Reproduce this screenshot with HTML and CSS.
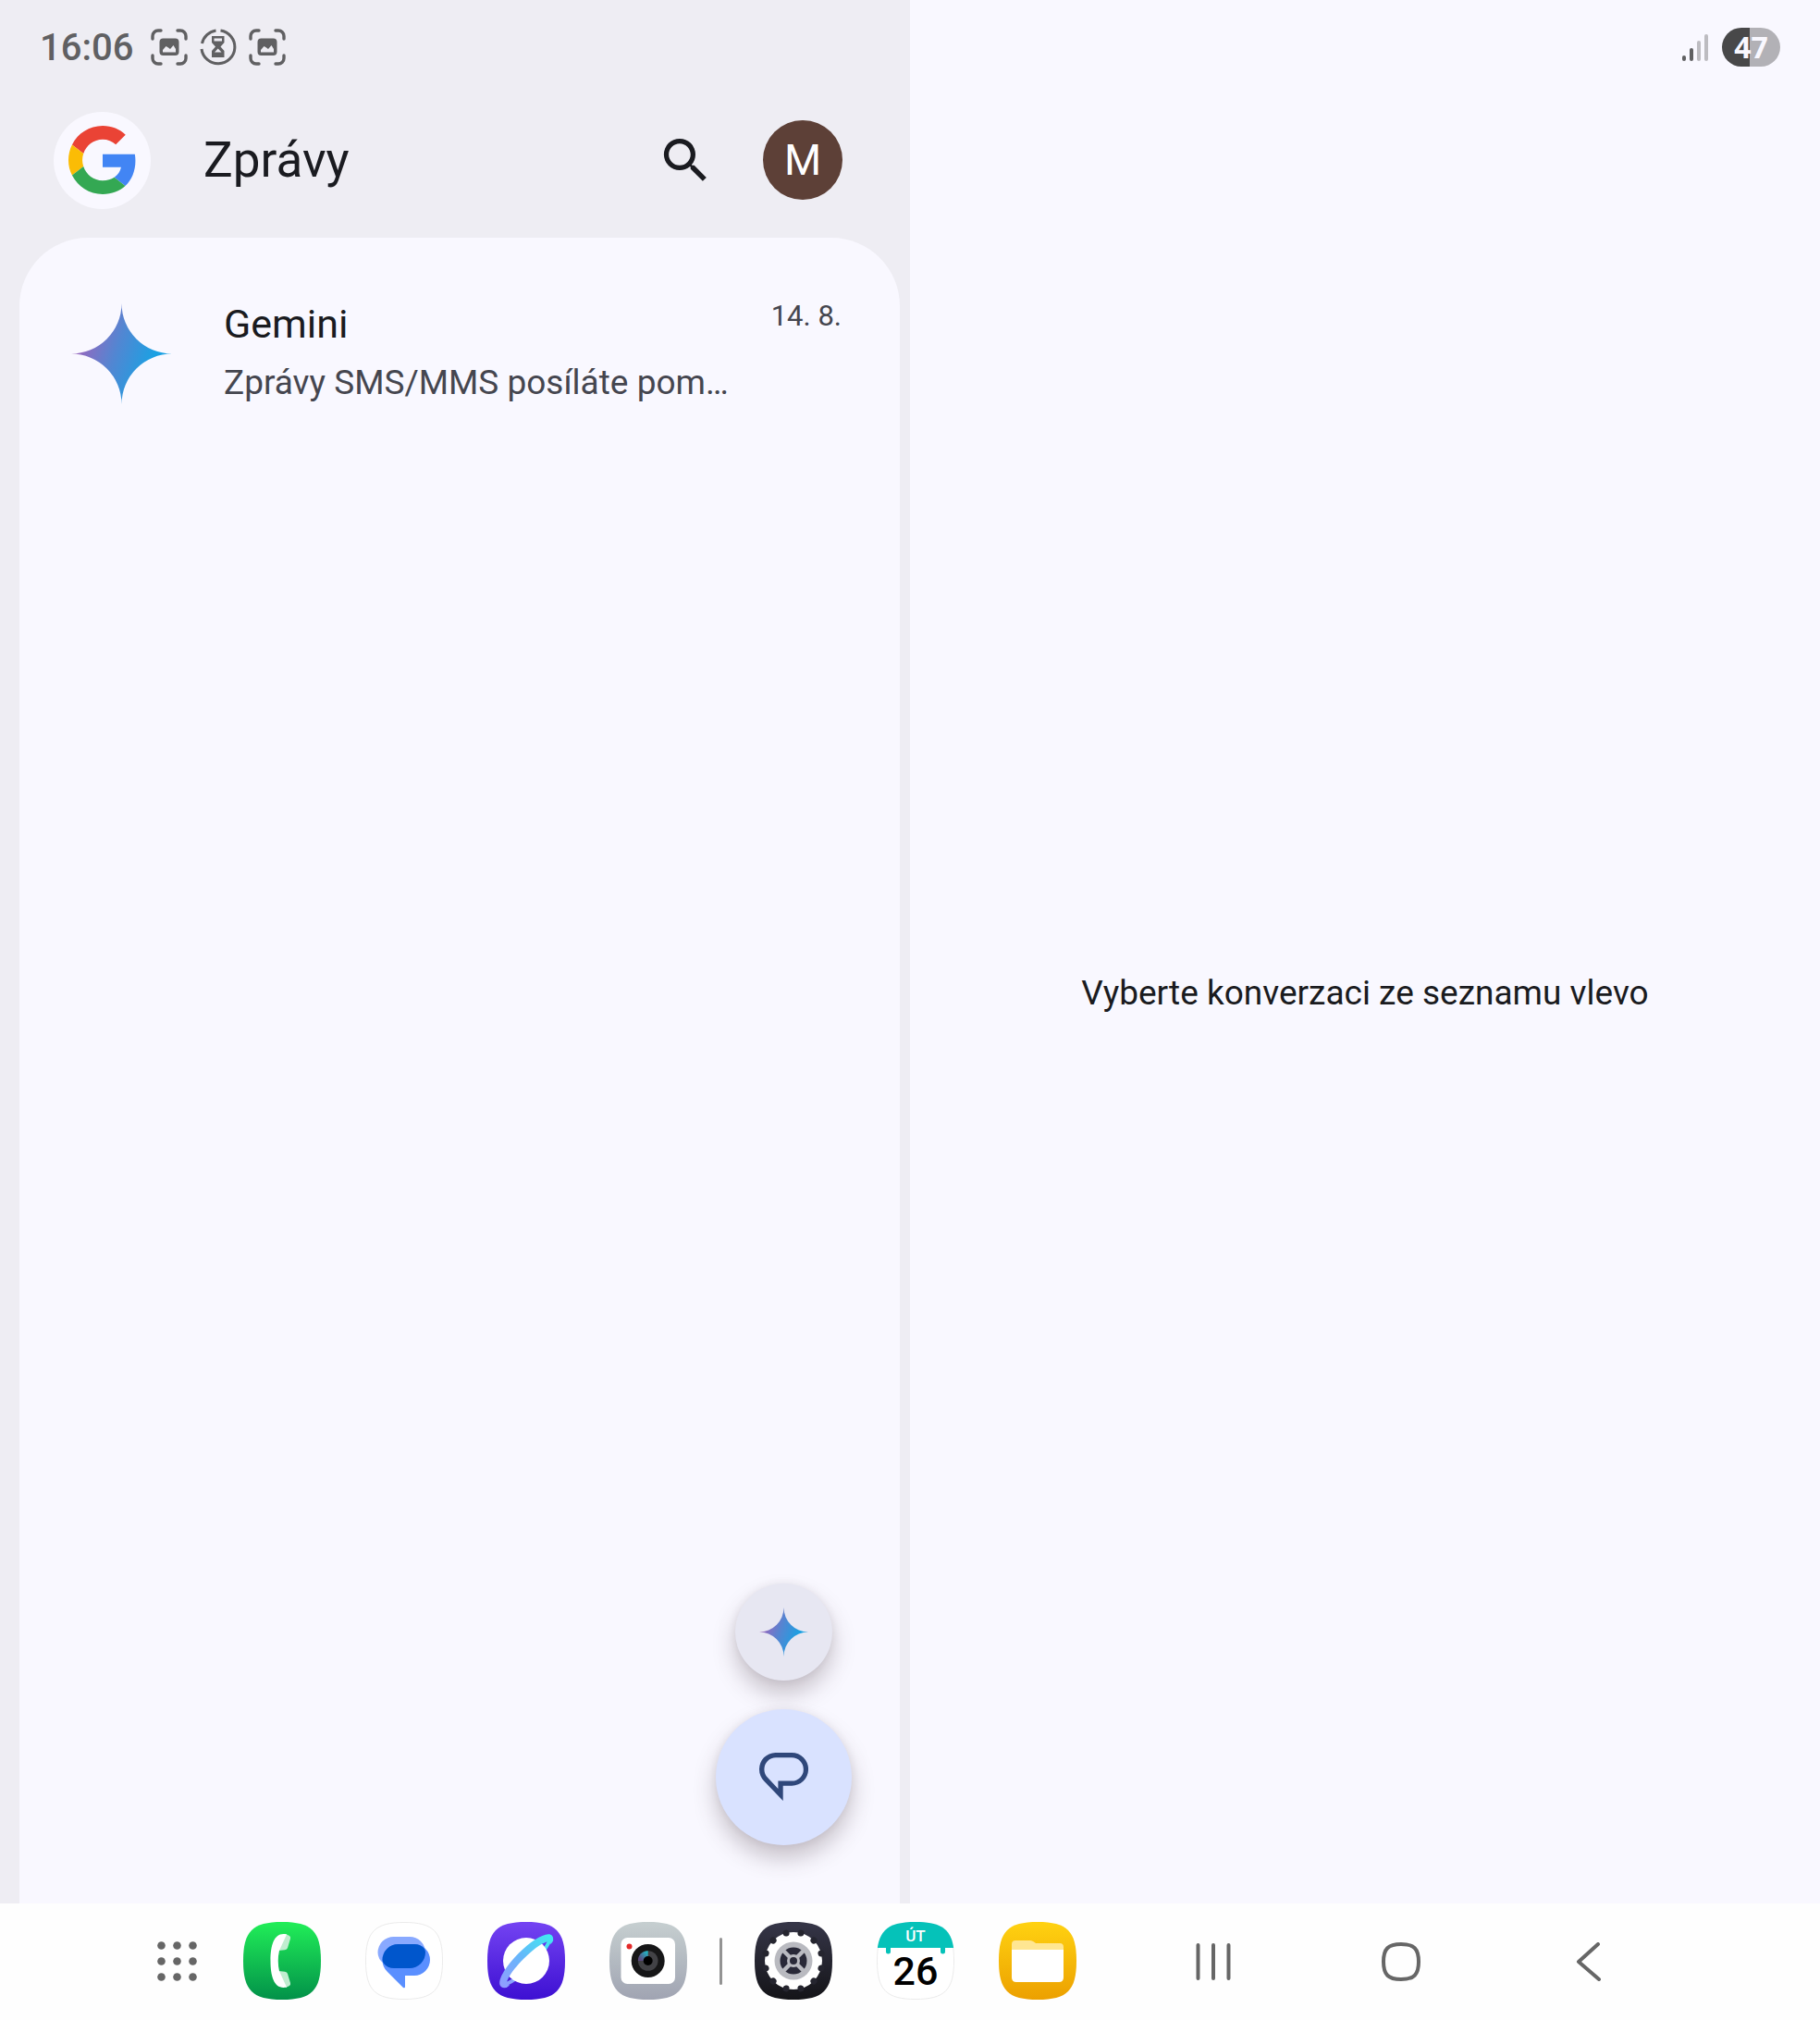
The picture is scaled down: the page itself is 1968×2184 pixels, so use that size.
FILE: index.html
```html
<!DOCTYPE html>
<html lang="cs">
<head>
  <meta charset="utf-8">
  <meta name="viewport" content="width=device-width, initial-scale=1">
  <title>Zprávy</title>
  <link rel="stylesheet" href="styles.css">
</head>
<body>
  <!-- shared gradients and shapes -->
  <svg class="defs" width="0" height="0" aria-hidden="true">
    <defs>
      <linearGradient id="gemini" x1="0" y1="0.3" x2="0.9" y2="0.6">
        <stop offset="0.1" stop-color="#9a66bd"/>
        <stop offset="0.5" stop-color="#5286d2"/>
        <stop offset="0.9" stop-color="#1ba1e3"/>
      </linearGradient>
      <linearGradient id="green" x1="0" y1="0" x2="0" y2="1">
        <stop offset="0" stop-color="#21ee58"/>
        <stop offset="1" stop-color="#029149"/>
      </linearGradient>
      <linearGradient id="violet" x1="0" y1="0" x2="0" y2="1">
        <stop offset="0" stop-color="#7443f2"/>
        <stop offset="1" stop-color="#3d10d2"/>
      </linearGradient>
      <linearGradient id="ring" x1="0" y1="0" x2="1" y2="0">
        <stop offset="0" stop-color="#929cff"/>
        <stop offset="0.5" stop-color="#65b8fa"/>
        <stop offset="1" stop-color="#3febf0"/>
      </linearGradient>
      <linearGradient id="silver" x1="0" y1="0" x2="0" y2="1">
        <stop offset="0" stop-color="#c6cfd0"/>
        <stop offset="1" stop-color="#a0a4b2"/>
      </linearGradient>
      <linearGradient id="dark" x1="0" y1="0" x2="0" y2="1">
        <stop offset="0" stop-color="#363648"/>
        <stop offset="1" stop-color="#141418"/>
      </linearGradient>
      <linearGradient id="yellow" x1="0" y1="0" x2="0" y2="1">
        <stop offset="0" stop-color="#ffd211"/>
        <stop offset="1" stop-color="#eca000"/>
      </linearGradient>
      <linearGradient id="lens" x1="0" y1="1" x2="1" y2="0">
        <stop offset="0.2" stop-color="#5b4a80"/>
        <stop offset="1" stop-color="#16c8d0"/>
      </linearGradient>
      <path id="squircle" d="M42 0C10 0 0 10 0 42s10 42 42 42 42-10 42-42S74 0 42 0z"/>
      <clipPath id="squircle-clip"><use href="#squircle"/></clipPath>
      <path id="star" d="M50 0A50 50 0 0 0 100 50 50 50 0 0 0 50 100 50 50 0 0 0 0 50 50 50 0 0 0 50 0z" fill="url(#gemini)"/>
      <g id="capture">
        <path d="M2 11V8a6 6 0 0 1 6-6h3M29 2h3a6 6 0 0 1 6 6v3M38 29v3a6 6 0 0 1-6 6h-3M11 38H8a6 6 0 0 1-6-6v-3" fill="none" stroke="#606062" stroke-width="3.4" stroke-linecap="round"/>
        <path fill="#606062" fill-rule="evenodd" d="M13.500 10.500h13a4 4 0 0 1 4 4v10.500a4 4 0 0 1-4 4h-13a4 4 0 0 1-4-4V14.500a4 4 0 0 1 4-4zM13 25.500h14V22l-2.500-4-3.500 4-2-1.500L16.500 19 13 23z"/>
      </g>
    </defs>
  </svg>

  <div class="screen">
    <section class="list-pane">
      <div class="status">
        <time class="clock">16:06</time>
        <svg width="40" height="40" viewBox="0 0 40 40"><use href="#capture"/></svg>
        <svg width="40" height="40" viewBox="0 0 40 40">
          <path d="M22.500 2A18 18 0 1 1 2 22M2.500 16A18 18 0 0 1 17.500 2" fill="none" stroke="#606062" stroke-width="3"/>
          <path fill="#606062" fill-rule="evenodd" d="M13 8h13.500v7l-4 4.500 4 4.500v7H13v-7l4-4.500-4-4.500zM15.500 10.500v3h8.500v-3zM19.700 21.500l-3.700 4h7.500z"/>
        </svg>
        <svg width="40" height="40" viewBox="0 0 40 40"><use href="#capture"/></svg>
      </div>

      <header class="top">
        <div class="logo">
          <svg width="74" height="74" viewBox="0 0 48 48">
            <path fill="#ea4335" d="M24 9.500c3.540 0 6.710 1.220 9.210 3.600l6.850-6.850C35.900 2.380 30.470 0 24 0 14.620 0 6.510 5.380 2.560 13.220l7.980 6.190C12.430 13.720 17.740 9.500 24 9.500z"/>
            <path fill="#4285f4" d="M46.980 24.550c0-1.570-.15-3.090-.38-4.550H24v9.020h12.940c-.58 2.960-2.260 5.480-4.780 7.180l7.730 6c4.510-4.180 7.090-10.360 7.090-17.650z"/>
            <path fill="#fbbc05" d="M10.530 28.590c-.48-1.450-.76-2.990-.76-4.590s.27-3.140.76-4.590l-7.980-6.190C.92 16.460 0 20.120 0 24c0 3.880.92 7.540 2.560 10.780l7.970-6.190z"/>
            <path fill="#34a853" d="M24 48c6.480 0 11.930-2.130 15.890-5.810l-7.730-6c-2.150 1.450-4.920 2.300-8.160 2.300-6.260 0-11.570-4.220-13.470-9.910l-7.980 6.190C6.510 42.620 14.620 48 24 48z"/>
          </svg>
        </div>
        <h1>Zprávy</h1>
        <button class="search" type="button" aria-label="Hledat">
          <svg width="63" height="63" viewBox="0 0 24 24">
            <path fill="#1a1b20" d="M15.500 14h-.79l-.28-.27A6.471 6.471 0 0 0 16 9.500 6.500 6.500 0 1 0 9.500 16c1.610 0 3.090-.59 4.230-1.570l.27.28v.79l5 4.990L20.490 19l-4.990-5zm-6 0C7.010 14 5 11.990 5 9.500S7.010 5 9.500 5 14 7.010 14 9.500 11.990 14 9.500 14z"/>
          </svg>
        </button>
        <button class="account" type="button">M</button>
      </header>

      <main class="card">
        <a class="conversation" href="#gemini-chat">
          <svg width="109" height="109" viewBox="0 0 100 100"><use href="#star"/></svg>
          <div class="text">
            <div class="name">Gemini</div>
            <div class="snippet">Zprávy SMS/MMS posíláte pom…</div>
          </div>
          <time class="date">14. 8.</time>
        </a>

        <div class="fabs">
          <button class="fab small" type="button" aria-label="Gemini">
            <svg width="53" height="53" viewBox="0 0 100 100"><use href="#star"/></svg>
          </button>
          <button class="fab" type="button" aria-label="Nový chat">
            <svg width="53" height="52" viewBox="0 0 53 52">
              <path fill="#2f477a" fill-rule="evenodd" d="M17.500 0h17.700a17.850 17.850 0 0 1 0 35.700h-9.500V52L5.500 31C2 27.500 0 23 0 18A17.700 17.700 0 0 1 17.500 0zM18 5.300A12.600 12.600 0 0 0 5.400 18c0 3.500 1.300 6.500 4 9.300l11 11.700v-8.400h14.800a12.650 12.650 0 0 0 0-25.300z"/>
            </svg>
          </button>
        </div>
      </main>
    </section>

    <section class="detail-pane">
      <div class="status right">
        <svg width="28" height="29" viewBox="0 0 28 29">
          <rect x="0" y="23" width="4" height="6" rx="2" fill="#606062"/>
          <rect x="8" y="15" width="4" height="14" rx="2" fill="#606062"/>
          <rect x="16" y="7" width="4" height="22" rx="2" fill="#bdbcc1"/>
          <rect x="24" y="0" width="4" height="29" rx="2" fill="#bdbcc1"/>
        </svg>
        <span class="battery">47</span>
      </div>
      <p class="empty">Vyberte konverzaci ze seznamu vlevo</p>
    </section>
  </div>

  <footer class="taskbar">
    <div class="dock">
      <button class="apps" type="button" aria-label="Aplikace">
        <svg width="43" height="43" viewBox="0 0 43 43" fill="#666">
          <circle cx="4.500" cy="4.500" r="4.300"/><circle cx="21.500" cy="4.500" r="4.300"/><circle cx="38.500" cy="4.500" r="4.300"/>
          <circle cx="4.500" cy="21.500" r="4.300"/><circle cx="21.500" cy="21.500" r="4.300"/><circle cx="38.500" cy="21.500" r="4.300"/>
          <circle cx="4.500" cy="38.500" r="4.300"/><circle cx="21.500" cy="38.500" r="4.300"/><circle cx="38.500" cy="38.500" r="4.300"/>
        </svg>
      </button>
      <button type="button" aria-label="Telefon">
        <svg width="84" height="84" viewBox="0 0 84 84">
          <use href="#squircle" fill="url(#green)"/>
          <path fill="#c0edd0" d="M46 13l4 2q1.500 1 1 3l-3 10q-.5 2-3 2.300L38 31zM38 53l7 .700q2.500.3 3 2.300l3 10q.5 2-1 3l-4 2z"/>
          <path fill="#fff" d="M47 13.500C34 10.500 29.500 24 29.500 42S34 73.500 47 70.500q-1-2-8-17.500-2.500-11 0-22 7-15.500 8-17.500z"/>
        </svg>
      </button>
      <button type="button" aria-label="Zprávy">
        <svg width="84" height="84" viewBox="0 0 84 84">
          <path d="M42 .5C10.500.5.5 10.500.5 42s10 41.500 41.500 41.500S83.500 73.500 83.500 42 73.500.5 42 .5z" fill="#fff" stroke="#ebebeb"/>
          <path fill="#89a9ff" d="M31 16h17a17 17 0 0 1 0 34H31q-7 0-11-5-6.500-5-6.500-12A17 17 0 0 1 31 16z"/>
          <path fill="#5a8fff" d="M35.500 24H53a17 17 0 0 1 0 34H43v12q0 2-2 1L24 54q-5.500-5-5.500-13a17 17 0 0 1 17-17z"/>
          <path fill="#0056cc" d="M35.500 24H53q7 0 11 5 1 2 1 4a17 17 0 0 1-17 17H31q-7 0-11-5-1.500-2-1.500-4a17 17 0 0 1 17-17z"/>
        </svg>
      </button>
      <button type="button" aria-label="Internet">
        <svg width="84" height="84" viewBox="0 0 84 84">
          <use href="#squircle" fill="url(#violet)"/>
          <g transform="translate(42 42) rotate(-45)">
            <path d="M-35 1A36 8 0 0 0 35 1" fill="none" stroke="url(#ring)" stroke-width="4"/>
            <circle r="25" fill="#fff"/>
            <path fill="url(#ring)" d="M-39 1C-40-7-20-11.500 0-11.500S40-7 39 1Q38 6 31 6C37 2 25-3.500 0-3.500S-37 2-31 6Q-38 6-39 1z"/>
          </g>
        </svg>
      </button>
      <button type="button" aria-label="Fotoaparát">
        <svg width="84" height="84" viewBox="0 0 84 84">
          <use href="#squircle" fill="url(#silver)"/>
          <rect x="12.500" y="17" width="58.500" height="50" rx="7" fill="#fff"/>
          <circle cx="21.500" cy="26.500" r="3" fill="#e32a2a"/>
          <circle cx="41.700" cy="42" r="18" fill="#161617"/>
          <circle cx="41.700" cy="42" r="10.800" fill="#424246"/>
          <path d="M41.700 42V31.200A10.800 10.800 0 0 0 30.900 42z" fill="url(#lens)"/>
          <circle cx="41.700" cy="42" r="5" fill="#000"/>
        </svg>
      </button>
      <span class="divider"></span>
      <button type="button" aria-label="Nastavení">
        <svg width="84" height="84" viewBox="0 0 84 84">
          <use href="#squircle" fill="url(#dark)"/>
          <circle cx="42" cy="42" r="31" fill="#fff"/>
          <circle cx="42" cy="42" r="31" fill="none" stroke="#25252f" stroke-width="7" stroke-linecap="round" pathLength="12" stroke-dasharray="0.001 0.999" stroke-dashoffset="0.500"/>
          <circle cx="42" cy="42" r="20.500" fill="#b9bac0"/>
          <circle cx="42" cy="42" r="14.500" fill="#292938"/>
          <path d="M31 31l22 22M53 31L31 53" stroke="#b9bac0" stroke-width="4.500"/>
          <circle cx="42" cy="42" r="7" fill="#b9bac0"/>
          <circle cx="42" cy="42" r="4" fill="#292938"/>
        </svg>
      </button>
      <button type="button" aria-label="Kalendář">
        <svg width="84" height="84" viewBox="0 0 84 84">
          <path d="M42 .5C10.500.5.5 10.500.5 42s10 41.500 41.500 41.500S83.500 73.500 83.500 42 73.500.5 42 .5z" fill="#fff" stroke="#ebebeb"/>
          <rect width="84" height="28" fill="#05c2b9" clip-path="url(#squircle-clip)"/>
          <path fill="#05c2b9" d="M10 27h5v5a2.500 2.500 0 0 1-5 0zM69 27h5v5a2.500 2.500 0 0 1-5 0z"/>
          <text class="cal-day" x="42" y="21">ÚT</text>
          <text class="cal-num" x="42" y="68">26</text>
        </svg>
      </button>
      <button type="button" aria-label="Soubory">
        <svg width="84" height="84" viewBox="0 0 84 84">
          <use href="#squircle" fill="url(#yellow)"/>
          <path fill="#ffe692" d="M14 32v-8q0-4 4-4h16q2 0 4 1.500l2 1.500h26q4 0 4 4v5z"/>
          <path fill="#fff" d="M14 30h56v30q0 5-5 5H19q-5 0-5-5z"/>
        </svg>
      </button>
    </div>

    <nav class="nav">
      <button type="button" aria-label="Poslední">
        <svg width="42" height="42" viewBox="0 0 42 42"><path d="M4.500 3v36M21 3v36M37.500 3v36" class="nav-line"/></svg>
      </button>
      <button type="button" aria-label="Domů">
        <svg width="42" height="42" viewBox="0 0 42 42"><path d="M21 2C7 2 2 7 2 21s5 19 19 19 19-5 19-19S35 2 21 2z" class="nav-line"/></svg>
      </button>
      <button type="button" aria-label="Zpět">
        <svg width="42" height="42" viewBox="0 0 42 42"><path d="M31 2L10 21l22 19" class="nav-line"/></svg>
      </button>
    </nav>
  </footer>
</body>
</html>
```

FILE: styles.css
```css
* {
  box-sizing: border-box;
}

body {
  margin: 0;
  min-height: 100vh;
  display: flex;
  flex-direction: column;
  font-family: Roboto, "Liberation Sans", sans-serif;
  background-color: #f9f8ff;
  color: #1a1b20;
}

svg {
  display: block;
  flex: none;
}

.defs {
  position: absolute;
}

button {
  background: none;
  border: none;
  padding: 0;
  font-family: inherit;
  cursor: pointer;
}

.screen {
  flex: 1;
  display: grid;
  grid-template-columns: 1fr 1fr;
}

.list-pane {
  display: flex;
  flex-direction: column;
  background-color: #eeedf3;
}

/* status bar */
.status {
  display: flex;
  align-items: center;
  gap: 13px;
  height: 102px;
  padding: 0 43px;
}

.status.right {
  justify-content: flex-end;
  gap: 15px;
}

.clock {
  font-size: 40px;
  font-weight: 500;
  color: #606062;
  margin-right: 6px;
}

.battery {
  width: 63px;
  line-height: 42px;
  border-radius: 21px;
  text-align: center;
  font-family: "Open Sans", sans-serif;
  font-size: 32px;
  font-weight: 700;
  color: #f9f8ff;
  background: linear-gradient(to right, #484849 47%, #b2b1b6 47%);
}

/* app header */
.top {
  display: flex;
  align-items: center;
  height: 142px;
  margin-bottom: 13px;
  padding: 0 73px 0 58px;
}

.logo {
  width: 105px;
  height: 105px;
  border-radius: 50%;
  background-color: #f9f8ff;
  display: flex;
  align-items: center;
  justify-content: center;
}

h1 {
  flex: 1;
  margin: 0 0 0 57px;
  font-size: 53px;
  font-weight: 400;
}

.account {
  width: 86px;
  height: 86px;
  margin-left: 52px;
  border-radius: 50%;
  background-color: #5d4037;
  color: white;
  font-size: 46px;
}

/* conversation list */
.card {
  flex: 1;
  display: flex;
  flex-direction: column;
  margin: 0 11px 0 21px;
  border-radius: 74px 74px 0 0;
  background-color: #f9f8ff;
}

.conversation {
  display: flex;
  align-items: center;
  padding: 68px 63px 0 56px;
  color: inherit;
  text-decoration: none;
}

.text {
  flex: 1;
  min-width: 0;
  margin-left: 56px;
  line-height: 50px;
}

.name {
  font-size: 43px;
  margin-bottom: 14px;
}

.snippet {
  font-size: 37px;
  color: #45464f;
  white-space: nowrap;
}

.date {
  align-self: flex-start;
  font-size: 31px;
  line-height: 34px;
  color: #45464f;
}

.fabs {
  margin: auto 52px 63px auto;
  display: flex;
  flex-direction: column;
  align-items: center;
  gap: 31px;
}

.fab {
  width: 147px;
  height: 147px;
  padding-bottom: 2px;
  border-radius: 50%;
  background-color: #d9e2ff;
  display: flex;
  align-items: center;
  justify-content: center;
  box-shadow: 0 14px 24px rgba(70, 50, 60, 0.28), 0 0 8px rgba(70, 50, 60, 0.08);
}

.fab.small {
  width: 105px;
  height: 105px;
  padding: 0;
  background-color: #e7e7f2;
}

/* right side */
.detail-pane {
  display: flex;
  flex-direction: column;
}

.empty {
  margin: auto;
  padding-bottom: 14px;
  font-size: 37px;
}

/* bottom bar */
.taskbar {
  display: flex;
  align-items: center;
  justify-content: space-between;
  height: 126px;
  padding: 0 229px 0 170px;
  background-color: #fefefe;
}

.dock {
  display: flex;
  align-items: center;
  gap: 48px;
  padding-bottom: 2px;
}

.apps {
  margin-right: 2px;
}

.divider {
  width: 3px;
  height: 51px;
  margin: 0 -13px;
  border-radius: 2px;
  background-color: #939393;
}

.cal-day {
  font-size: 17px;
  font-weight: 500;
  text-anchor: middle;
  fill: white;
}

.cal-num {
  font-size: 43px;
  font-weight: 500;
  text-anchor: middle;
}

.nav {
  display: flex;
  gap: 161px;
}

.nav-line {
  fill: none;
  stroke: #666;
  stroke-width: 4;
  stroke-linecap: round;
  stroke-linejoin: round;
}
```
